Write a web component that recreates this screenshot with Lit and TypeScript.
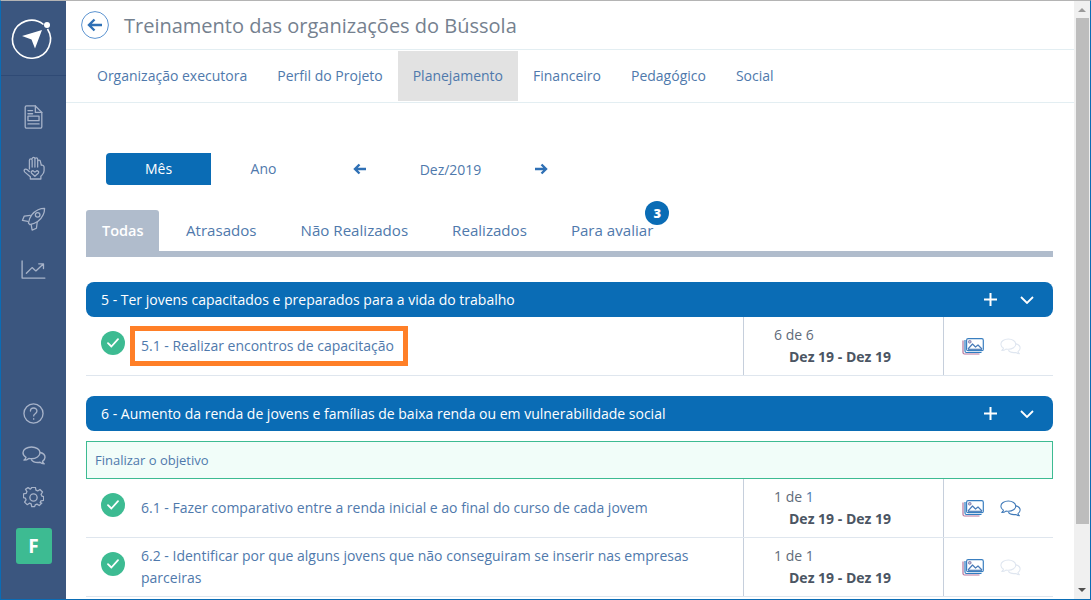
import { LitElement, html, css, svg } from "lit";
import { customElement } from "lit/decorators.js";

const side = (w: number, h: number, vw: number, vh: number, body: unknown) => html`<svg class="si" width=${w} height=${h} viewBox="0 0 ${vw} ${vh}" fill="none" stroke="#a7b3c9" stroke-width="1.4" stroke-linecap="round" stroke-linejoin="round">${body}</svg>`;

const docIcon = side(19, 24, 20, 26, svg`<path d="M1 2.500a1.500 1.500 0 0 1 1.500-1.500H12l7 7v15.500a1.500 1.500 0 0 1-1.500 1.500h-15A1.500 1.500 0 0 1 1 23.500z"/><path d="M12 1v7h7M4 6h5M4 9.500h5"/><rect x="4" y="12" width="12" height="5"/><path d="M4 20.500h12"/>`);
const handIcon = side(22, 24, 24, 26, svg`<path d="M7 14V4.500a1.500 1.500 0 0 1 3 0V12M10 3a1.500 1.500 0 0 1 3 0v9M13 3.500a1.500 1.500 0 0 1 3 0V12M16 6a1.500 1.500 0 0 1 3 0L20 10c1.500-.5 3 .5 3 2v4c0 2-1 3.500-2.500 5l-1 1v3H8v-2.500L2 17.500c-1-1-1-2.400 0-3 1-.6 2-.2 3 .7l2 1.800"/><path d="M13 22l-3.600-3.300c-1.500-1.500.8-3.600 2.400-2.200l1.200 1 1.200-1c1.600-1.400 3.900.7 2.400 2.200z"/>`);
const rocketIcon = side(25, 24, 26, 26, svg`<path d="M7.500 17.500c1-6 5-12 10.500-14.500 2-.9 5-1.500 7-1.500 0 2-.6 5-1.500 7-2.500 5.500-8.500 9.500-14.500 10.500z"/><circle cx="17.500" cy="8.500" r="2.500"/><path d="M9.500 9L3 9.800 1 14.500l5.800 1M17 16.500l-.8 6.500-4.700 2-1-5.800"/>`);
const chartIcon = side(25, 19, 26, 20, svg`<path d="M1 1v18h24"/><path d="M5.500 14l6-6 4 3.500L23 4.500M18.500 4H23.500v5"/>`);
const helpIcon = side(21, 21, 22, 22, svg`<circle cx="11" cy="11" r="10"/><path d="M7.800 8.500c0-4.300 6.800-4.300 6.800 0 0 2.800-3.400 2.600-3.400 5"/><path d="M11.200 16.500v.4"/>`);
const chatPaths = svg`<path d="M9.500 1C4.800 1 1 3.500 1 6.800c0 2 1.300 3.500 3 4.600-.2 1-.9 2-2 2.700 2 0 3.600-.6 4.800-1.700 1 .2 1.800.3 2.700.3 4.700 0 8.500-2.600 8.500-5.900S14.200 1 9.500 1z"/><path d="M18.300 6.500c2.700.7 4.700 2.500 4.700 4.800 0 1.700-1 3-2.500 4 .2.900.7 1.800 1.700 2.500-1.700 0-3.200-.5-4.200-1.500-.8.200-1.500.2-2.200.2-2.800 0-5.200-1-6.300-2.700"/>`;
const sideChat = side(24, 19, 24, 19, chatPaths);
const gearIcon = side(21, 21, 22, 22, svg`<path d="M9 1h4l.6 3 1.900.8L18 3.200 20.800 6l-1.600 2.500.8 1.900 2 .6v4l-3 .6-.8 1.900L20 18l-2.800 2.800-2.500-1.600-1.900.8-.6 2H9l-.6-3-1.900-.8L4 19.800 1.200 17l1.600-2.500L2 12.600l-2-.6V8l3-.6.800-1.900L2.200 3 5 1.200l2.500 1.600L8.400 2z" transform="translate(.5 -.5) scale(.96)"/><circle cx="11" cy="11" r="3.800"/>`);

const picIcon = html`<svg class="ri" width="22" height="17" viewBox="0 0 22 17" fill="none" stroke-width="1.200" stroke-linejoin="round"><path d="M1 2.500v12a1.500 1.500 0 0 0 1.500 1.500h15" stroke="#b5759c"/><path d="M3 2v11a1.500 1.500 0 0 0 1.500 1.500h15" stroke="#2f7cc0"/><rect x="4.600" y=".7" width="16.700" height="12" rx="1.500" stroke="#3a7fc0" fill="#fff"/><circle cx="7.800" cy="3.800" r="1.200" stroke="#8a84b0"/><path d="M6 11l4.500-5 3 3 2.500-2 4 4" stroke="#4a7cb8"/><path d="M6 11.300h14" stroke="#4a7cb8"/></svg>`;
const chat = (dim: boolean) => html`<svg class="ri" width="21" height="17" viewBox="0 0 24 19" fill="none" stroke=${dim ? "#dfe6f0" : "#3f79b8"} stroke-width="1.200" stroke-linejoin="round">${chatPaths}</svg>`;
const check = html`<span class="check"><svg width="12" height="10" viewBox="0 0 12 10" fill="none" stroke="#fff" stroke-width="1.800" stroke-linecap="round" stroke-linejoin="round"><path d="M1 5.200l3.400 3.300L11 1.200"/></svg></span>`;
const arrow = (left: boolean) => html`<svg width="13" height="12" viewBox="0 0 13 12" fill="none" stroke="#2f70b5" stroke-width="2.400" stroke-linejoin="miter"><path d=${left ? "M13 6H2M6.500 1.500L2 6l4.500 4.500" : "M0 6h11M6.500 1.500L11 6l-4.500 4.500"}/></svg>`;

interface Row { text: string; done: string; total: string; blue: boolean; dim: boolean; mark?: boolean; }

const section = (title: string, body: unknown) => html`
  <div class="bar"><span>${title}</span>
    <svg class="plus" width="13" height="13" viewBox="0 0 13 13" stroke="#fff" stroke-width="2"><path d="M6.500 0v13M0 6.500h13"/></svg>
    <svg class="chev" width="14" height="8" viewBox="0 0 14 8" fill="none" stroke="#fff" stroke-width="1.800"><path d="M1 1l6 6 6-6"/></svg>
  </div>${body}`;

const row = (r: Row) => html`
  <div class="row">
    <div class="c1">${check}<a class="link">${r.text}${r.mark ? html`<i class="mark"></i>` : ""}</a></div>
    <div class="c2"><div class="count">${r.done} de <span class=${r.blue ? "bl" : ""}>${r.total}</span></div><div class="dates">Dez 19 - Dez 19</div></div>
    <div class="c3">${picIcon}${chat(r.dim)}</div>
  </div>`;

@customElement("app-root")
export class AppRoot extends LitElement {
  static styles = css`
    :host { display: block; width: 1091px; height: 600px; overflow: hidden; font-family: "Open Sans", sans-serif; color: #5f6b7a; background: #fff; }
    * { box-sizing: border-box; }
    .win { display: flex; height: 600px; border-top: 1px solid #b4b4b4; border-left: 1px solid #0a6cb5; border-right: 1px solid #0a6cb5; border-bottom: 1px solid #0a6cb5; }
    .side { width: 65px; flex: none; background: #3b567f; display: flex; flex-direction: column; align-items: center; }
    .logo { height: 75px; width: 100%; border-bottom: 1px solid #2f4a75; display: flex; align-items: center; justify-content: center; padding-top: 1px; padding-right: 3px; flex: none; }
    .nav1 { display: flex; flex-direction: column; align-items: center; gap: 27px; margin-top: 29px; }
    .nav1 .si:nth-child(4) { margin-top: 2px; }
    .nav2 { display: flex; flex-direction: column; align-items: center; margin-top: auto; padding-bottom: 35px; }
    .nav2 .si:nth-child(2) { margin-top: 22px; }
    .nav2 .si:nth-child(3) { margin-top: 22px; }
    .tile { width: 36px; height: 36px; margin-top: 20px; border-radius: 3px; background: #3dbb92; color: #fff; font: 700 19px "Open Sans", sans-serif; display: flex; align-items: center; justify-content: center; }
    .main { flex: 1; min-width: 0; display: flex; flex-direction: column; }
    .head { height: 49px; flex: none; display: flex; align-items: center; padding-left: 15px; gap: 15px; border-bottom: 1px solid #e3eef2; }
    .head h1 { margin: 0; font-size: 20px; font-weight: 400; color: #75818f; }
    .tabs1 { height: 53px; flex: none; display: flex; padding-left: 16px; padding-top: 1px; border-bottom: 1px solid #e3eef2; }
    .tabs1 a { padding: 0 15px; height: 50px; line-height: 50px; font-size: 14px; color: #4f79ac; }
    .tabs1 a.on { background: #e2e2e2; }
    .body { padding: 50px 21px 0 20px; flex: 1; overflow: hidden; }
    .period { display: flex; align-items: center; height: 32px; margin-left: 20px; font-size: 14px; color: #4f79ac; }
    .p { width: 105px; height: 32px; line-height: 32px; text-align: center; }
    .p.on { background: #0a6cb5; color: #fff; border-radius: 4px 0 0 4px; }
    .arrow1 { margin-left: 37px; display: flex; }
    .month { width: 169px; text-align: center; font-size: 14px; }
    .tabs2 { display: flex; margin-top: 25px; margin-bottom: 25px; height: 47px; border-bottom: 6px solid #b0bccc; gap: 14px; font-size: 15.100px; color: #4f79ac; }
    .tabs2 a { padding: 0 15px; height: 41px; line-height: 41px; position: relative; }
    .tabs2 a.on { background: #b0bccc; color: #fff; font-weight: 600; font-size: 14.500px; border-radius: 3px 3px 0 0; padding: 0 0 0 16px; width: 73px; margin-right: -2px; }
    .badge { position: absolute; right: -1px; top: -9px; width: 24px; height: 24px; border-radius: 50%; background: #0a6cb5; color: #fff; font: 800 13px/24px "Open Sans", sans-serif; text-align: center; }
    .bar { height: 35px; background: #0a6cb5; border-radius: 8px; color: #fff; font-size: 14px; font-weight: 500; padding: 0 19px 0 15px; display: flex; align-items: center; }
    .row + .bar { margin-top: 20px; }
    .bar span { flex: 1; }
    .chev { margin-left: 23px; }
    .row { display: grid; grid-template-columns: 657px 200px 110px; height: 59px; border-bottom: 1px solid #dfe6ee; }
    .c1 { display: flex; align-items: center; padding-left: 15px; gap: 16px; }
    .check { flex: none; width: 24px; height: 24px; border-radius: 50%; background: #3dbb92; display: flex; align-items: center; justify-content: center; margin-bottom: 6px; }
    .link { position: relative; font-size: 14px; line-height: 22px; color: #4f79ac; }
    .mark { position: absolute; inset: -9px -14px -9px -11px; border: 5px solid #ff7f27; }
    .c2 { border-left: 1px solid #c6cfdc; padding: 7px 0 0 30px; font-size: 14px; line-height: 22px; }
    .count { color: #5f6b7a; }
    .bl { color: #4f79ac; }
    .dates { font-weight: 700; color: #4b5563; padding-left: 15px; }
    .c3 { border-left: 1px solid #c6cfdc; display: flex; align-items: center; padding-left: 18px; gap: 16px; }
    .notice { height: 38px; margin-top: 10px; border: 1px solid #3dbb92; background: #f1fdf9; padding-left: 8px; line-height: 36px; font-size: 13px; color: #4f79ac; }
    .scroll { width: 16px; flex: none; background: #f0f0f0; display: flex; flex-direction: column; align-items: center; }
    .up, .down { width: 0; height: 0; border-left: 4px solid transparent; border-right: 4px solid transparent; }
    .up { margin-top: 7px; border-bottom: 4px solid #9a9a9a; }
    .thumb { width: 13px; height: 506px; margin-top: 6px; background: #bdbdbd; }
    .down { margin-top: auto; margin-bottom: 7px; border-top: 4px solid #505050; }
  `;

  render() {
    return html`<div class="win">
      <aside class="side">
        <div class="logo">
          <svg width="46" height="46" viewBox="0 0 46 46" fill="none">
            <path d="M34.500 8.500A19 19 0 1 0 38.500 13" stroke="#fff" stroke-width="1.600"/>
            <circle cx="38" cy="9" r="3" fill="#fff"/>
            <path d="M33 14L13 20l9.500 3.500L26 32.500z" fill="#fff"/>
          </svg>
        </div>
        <div class="nav1">${docIcon}${handIcon}${rocketIcon}${chartIcon}</div>
        <div class="nav2">${helpIcon}${sideChat}${gearIcon}<div class="tile">F</div></div>
      </aside>
      <main class="main">
        <header class="head">
          <svg width="28" height="28" viewBox="0 0 28 28" fill="none"><circle cx="14" cy="14" r="13.400" stroke="#5b93d0"/><path d="M21 14H8.500M13.500 8.500L8 14l5.500 5.500" stroke="#2f70b5" stroke-width="2.400"/></svg>
          <h1>Treinamento das organizações do Bússola</h1>
        </header>
        <nav class="tabs1">
          <a>Organização executora</a><a>Perfil do Projeto</a><a class="on">Planejamento</a><a>Financeiro</a><a>Pedagógico</a><a>Social</a>
        </nav>
        <div class="body">
          <div class="period">
            <div class="p on">Mês</div><div class="p">Ano</div>
            <span class="arrow1">${arrow(true)}</span><div class="month">Dez/2019</div>${arrow(false)}
          </div>
          <div class="tabs2">
            <a class="on">Todas</a><a>Atrasados</a><a>Não Realizados</a><a>Realizados</a><a>Para avaliar<span class="badge">3</span></a>
          </div>
          ${section("5 - Ter jovens capacitados e preparados para a vida do trabalho", row({ text: "5.1 - Realizar encontros de capacitação", done: "6", total: "6", blue: false, dim: true, mark: true }))}
          ${section("6 - Aumento da renda de jovens e famílias de baixa renda ou em vulnerabilidade social", html`
            <div class="notice">Finalizar o objetivo</div>
            ${row({ text: "6.1 - Fazer comparativo entre a renda inicial e ao final do curso de cada jovem", done: "1", total: "1", blue: true, dim: false })}
            ${row({ text: "6.2 - Identificar por que alguns jovens que não conseguiram se inserir nas empresas parceiras", done: "1", total: "1", blue: false, dim: true })}
          `)}
        </div>
      </main>
      <div class="scroll"><span class="up"></span><div class="thumb"></div><span class="down"></span></div>
    </div>`;
  }
}
